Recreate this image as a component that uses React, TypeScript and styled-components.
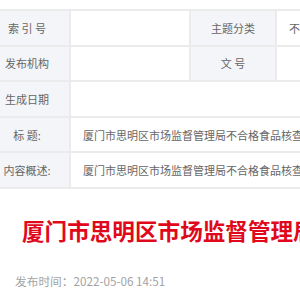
import React from 'react'
import styled, { createGlobalStyle } from 'styled-components'

const GlobalStyle = createGlobalStyle`
  html, body {
    margin: 0;
    padding: 0;
    background: #fff;
    overflow: hidden;
  }
  body {
    font-family: "Noto Sans CJK SC", "Noto Sans", sans-serif;
  }
`

const Page = styled.div`
  width: 300px;
  height: 300px;
  overflow: hidden;
`

const InfoTable = styled.table`
  margin: 9px 0 0 -17px;
  width: 340px;
  border-collapse: collapse;
  table-layout: fixed;
`

const Label = styled.td`
  width: 84px;
  height: 33.6px;
  padding: 0;
  background: #f3f5f8;
  border: 2px solid #ebebeb;
  color: #666;
  font-size: 11px;
  text-align: center;
  white-space: nowrap;
`

const Value = styled.td<{ $wide?: boolean }>`
  height: 33.6px;
  padding: 0 0 0 12px;
  border: 2px solid #ebebeb;
  color: #666;
  font-size: 11px;
  white-space: nowrap;
  overflow: hidden;
  ${(p) => (p.$wide ? '' : 'width: 106px;')}
`

const Title = styled.h1`
  margin: 28px 0 0 22px;
  font-size: 22.6px;
  line-height: 28px;
  font-weight: 700;
  color: #e0091b;
  white-space: nowrap;
`

const Meta = styled.div`
  margin: 28px 0 0 15px;
  font-size: 11.7px;
  line-height: 16px;
  color: #a3a3a3;
  white-space: nowrap;
`

const TITLE = '厦门市思明区市场监督管理局不合格食品核查处置情况'

export default function App() {
  return (
    <Page>
      <GlobalStyle />
      <InfoTable>
        <tbody>
          <tr>
            <Label>索 引 号</Label>
            <Value />
            <Label>主题分类</Label>
            <Value $wide>不合格食品</Value>
          </tr>
          <tr>
            <Label>发布机构</Label>
            <Value />
            <Label>文 号</Label>
            <Value $wide />
          </tr>
          <tr>
            <Label>生成日期</Label>
            <Value colSpan={3} $wide />
          </tr>
          <tr>
            <Label>标 题:</Label>
            <Value colSpan={3} $wide>{TITLE}</Value>
          </tr>
          <tr>
            <Label>内容概述:</Label>
            <Value colSpan={3} $wide>{TITLE}</Value>
          </tr>
        </tbody>
      </InfoTable>
      <Title>{TITLE}</Title>
      <Meta>发布时间：2022-05-06 14:51</Meta>
    </Page>
  )
}
